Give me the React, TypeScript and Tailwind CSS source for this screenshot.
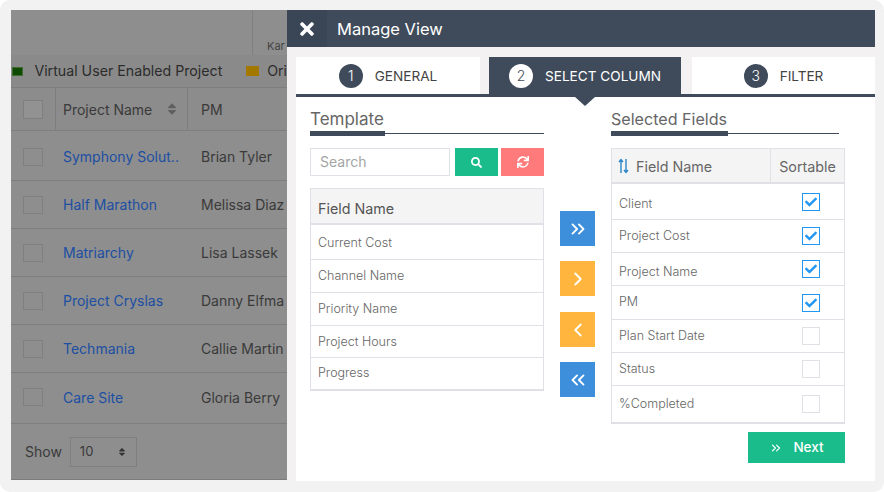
import { FaCheck, FaSearch, FaSort, FaSync, FaTimes } from 'react-icons/fa';
import { FiChevronLeft, FiChevronRight, FiChevronsLeft, FiChevronsRight } from 'react-icons/fi';

const projects = [
  { name: 'Symphony Solut..', pm: 'Brian Tyler' },
  { name: 'Half Marathon', pm: 'Melissa Diaz' },
  { name: 'Matriarchy', pm: 'Lisa Lassek' },
  { name: 'Project Cryslas', pm: 'Danny Elfma' },
  { name: 'Techmania', pm: 'Callie Martin' },
  { name: 'Care Site', pm: 'Gloria Berry' },
];

const templateFields = [
  { label: 'Current Cost', row: 'h-[35px] pt-[3px]' },
  { label: 'Channel Name', row: 'h-[33px]' },
  { label: 'Priority Name', row: 'h-[33px] pt-[1px]' },
  { label: 'Project Hours', row: 'h-[32px] pt-[1px]' },
  { label: 'Progress', row: 'h-[31px]' },
];

const selectedFields = [
  { label: 'Client', checked: true, row: 'h-[36px]', text: 'pt-[5px]' },
  { label: 'Project Cost', checked: true, row: 'h-[33px]', text: '' },
  { label: 'Project Name', checked: true, row: 'h-[33px]', text: 'pt-[6px]' },
  { label: 'PM', checked: true, row: 'h-[34px]', text: '' },
  { label: 'Plan Start Date', checked: false, row: 'h-[33px]', text: 'pt-[1px]' },
  { label: 'Status', checked: false, row: 'h-[33px]', text: '' },
  { label: '%Completed', checked: false, row: 'h-[36px]', text: 'pt-[1px]' },
];

function Heading({ title, size, underline, rule }: { title: string; size: string; underline: string; rule: string }) {
  return (
    <div className={rule}>
      <div className={`${size} leading-[24px] text-[#666]`}>{title}</div>
      <div className="flex items-center h-[5px]">
        <div className={`${underline} h-[5px] bg-[#3f4b5b]`} />
        <div className="flex-1 h-[1px] bg-[#3f4b5b]" />
      </div>
    </div>
  );
}

function Step({ n, label, active, className }: { n: number; label: string; active?: boolean; className: string }) {
  return (
    <div
      className={`${className} relative h-[37px] flex items-center justify-center gap-[12px] text-[13.6px] ${
        active ? 'bg-[#3f4b5b] text-white' : 'bg-white text-[#444]'
      }`}
    >
      <span
        className={`w-[24px] h-[24px] rounded-full flex items-center justify-center text-[14px] font-light ${
          active ? 'bg-white text-[#3f4b5b]' : 'bg-[#3f4b5b] text-white'
        }`}
      >
        {n}
      </span>
      <span className="pt-[2px]">{label}</span>
      {active && (
        <span className="absolute left-[86px] top-[40px] border-x-[10px] border-t-[9px] border-x-transparent border-t-[#3f4b5b]" />
      )}
    </div>
  );
}

function MoveButton({ color, children }: { color: string; children: React.ReactNode }) {
  return <div className={`w-[35px] h-[35px] flex items-center justify-center text-white text-[22px] ${color}`}>{children}</div>;
}

export default function App() {
  return (
    <div className="w-[884px] h-[492px] bg-white overflow-hidden" style={{ fontFamily: 'Inter, "Open Sans", sans-serif' }}>
      <div className="w-full h-full rounded-[10px] bg-[#f2f2f2] pl-[11px] pt-[10px] flex">
        {/* dimmed page behind the drawer */}
        <div className="w-[276px] h-[470px] bg-[#8e8e8e] border-b border-[#7b7b7b] flex flex-col text-[#3e3e3e] overflow-hidden whitespace-nowrap">
          <div className="h-[45px] flex shrink-0">
            <div className="w-[242px] border-r border-[#808080]" />
            <div className="pl-[14px] pt-[28px] text-[11px] text-[#444]">Kar</div>
          </div>
          <div className="h-[33px] shrink-0 bg-[#8a8a8a] border-b border-[#7e7e7e] flex items-center text-[14.2px] text-[#2c2c2c]">
            <span className="w-[13px] h-[9px] ml-[1px] bg-[#0e4a00] border border-[#3d6b30]" />
            <span className="ml-[11px]">Virtual User Enabled Project</span>
            <span className="w-[15px] h-[10px] ml-[24px] bg-[#a37800]" />
            <span className="ml-[8px]">Ori</span>
          </div>
          <div className="h-[43px] shrink-0 bg-[#8c8c8c] border-b border-[#7e7e7e] flex items-center text-[14px] text-[#3a3a3a]">
            <div className="w-[45px] h-full flex items-center pl-[12px] border-r border-[#7e7e7e]">
              <span className="w-[20px] h-[19px] border border-[#7f7f7f] bg-[#929292]" />
            </div>
            <div className="w-[132px] h-full flex items-center justify-between pl-[7px] pr-[8px] border-r border-[#7e7e7e]">
              Project Name
              <FaSort className="text-[#5f5f5f] text-[14px]" />
            </div>
            <div className="pl-[13px]">PM</div>
          </div>
          <div className="pt-[2px]">
            {projects.map((p, i) => (
              <div key={p.name} className={`h-[48px] shrink-0 flex items-center text-[14px] ${i < projects.length - 1 ? 'border-b border-[#7e7e7e]' : ''}`}>
                <div className="w-[45px] pl-[12px]">
                  <span className="block w-[20px] h-[18px] border border-[#7f7f7f] bg-[#8e8e8e]" />
                </div>
                <div className="w-[138px] pl-[7px] text-[#1c4fa3]">{p.name}</div>
                <div className="pl-[7px] text-[#3a3a3a]">{p.pm}</div>
              </div>
            ))}
          </div>
          <div className="mt-[2px] flex-1 border-t border-[#7e7e7e] flex items-center pl-[14px] text-[14px] text-[#3a3a3a]">
            Show
            <div className="ml-[8px] w-[67px] h-[30px] border border-[#7f7f7f] flex items-center justify-between pl-[9px] pr-[9px] text-[13px]">
              10
              <FaSort className="text-[#333] text-[10px]" />
            </div>
          </div>
        </div>

        {/* Manage View drawer */}
        <div className="w-[588px] h-[471px] bg-[#f3f1f2] flex flex-col">
          <div className="h-[37px] bg-[#3f4b5b] flex items-center text-white">
            <div className="w-[40px] h-full bg-[#3a4656] flex items-center justify-center text-[20px]">
              <FaTimes />
            </div>
            <span className="ml-[10px] pt-[1px] text-[16.5px]">Manage View</span>
          </div>
          <div className="mt-[10px] ml-[9px] flex">
            <Step n={1} label="GENERAL" className="w-[184px]" />
            <Step n={2} label="SELECT COLUMN" active className="w-[192px] ml-[9px]" />
            <Step n={3} label="FILTER" className="w-[183px] ml-[11px]" />
          </div>
          <div className="ml-[9px] flex-1 border-t-[3px] border-[#3f4b5b] bg-white flex">
            <div className="w-[248px] pl-[14px]">
              <Heading title="Template" size="text-[17px]" underline="w-[75px]" rule="w-[234px] mt-[10px]" />
              <div className="mt-[12px] flex gap-[5px] w-[234px]">
                <div className="w-[140px] h-[28px] border border-[#e0e0e6] flex items-center pl-[9px] pb-[2px] text-[14px] text-[#a5a5a5]">Search</div>
                <div className="w-[43px] h-[28px] bg-[#1abc8b] text-white flex items-center justify-center text-[11px]">
                  <FaSearch />
                </div>
                <div className="ml-[-2px] w-[43px] h-[28px] bg-[#ff7a7a] text-white flex items-center justify-center text-[12px]">
                  <FaSync />
                </div>
              </div>
              <div className="mt-[12px] w-[234px] border border-[#e0e0e6] border-b-2">
                <div className="h-[36px] bg-[#f4f4f4] border-b-2 border-[#e0e0e6] flex items-center pl-[7px] pt-[6px] text-[14.3px] text-[#555]">Field Name</div>
                {templateFields.map((f, i) => (
                  <div
                    key={f.label}
                    className={`${f.row} ${i < templateFields.length - 1 ? 'border-b border-[#e0e0e6]' : ''} flex items-center pl-[7px] text-[12.5px] font-light text-[#666]`}
                  >
                    {f.label}
                  </div>
                ))}
              </div>
            </div>

            <div className="w-[35px] ml-[16px] pt-[114px] flex flex-col">
              <MoveButton color="bg-[#3d8fdb]"><FiChevronsRight /></MoveButton>
              <div className="h-[15px]" />
              <MoveButton color="bg-[#ffb53e]"><FiChevronRight /></MoveButton>
              <div className="h-[16px]" />
              <MoveButton color="bg-[#ffb53e]"><FiChevronLeft /></MoveButton>
              <div className="h-[15px]" />
              <MoveButton color="bg-[#3d8fdb]"><FiChevronsLeft /></MoveButton>
            </div>

            <div className="ml-[16px] w-[234px]">
              <Heading title="Selected Fields" size="text-[16.1px]" underline="w-[117px]" rule="w-[228px] mt-[10px]" />
              <div className="mt-[12px] border border-[#e0e0e6] border-b-2">
                <div className="h-[35px] bg-[#f4f4f4] border-b-2 border-[#e0e0e6] flex items-center text-[14.3px] text-[#666]">
                  <div className="w-[159px] h-full flex items-center pl-[6px] gap-[7px] border-r border-[#e0e0e6]">
                    <svg width="11" height="16" viewBox="0 0 11 16" fill="none" stroke="#2a86c8" strokeWidth="1.4">
                      <path d="M3 15V1.5M1 4l2-2.5L5 4" />
                      <path d="M8 1v13.5M6 12l2 2.5 2-2.5" />
                    </svg>
                    <span className="pt-[2px]">Field Name</span>
                  </div>
                  <div className="flex-1 text-center pt-[2px]">Sortable</div>
                </div>
                {selectedFields.map((f, i) => (
                  <div
                    key={f.label}
                    className={`${f.row} ${i < selectedFields.length - 1 ? 'border-b border-[#e0e0e6]' : ''} flex items-center pl-[7px] pr-[24px] justify-between text-[12.5px] font-light text-[#666]`}
                  >
                    <span className={f.text}>{f.label}</span>
                    {f.checked ? (
                      <span className="w-[18px] h-[18px] border border-[#2196f3] flex items-center justify-center text-[#2196f3] text-[12px]">
                        <FaCheck />
                      </span>
                    ) : (
                      <span className="w-[18px] h-[18px] border border-[#e0e0e6]" />
                    )}
                  </div>
                ))}
              </div>
              <div className="mt-[8px] ml-auto w-[97px] h-[31px] bg-[#1abc8b] text-white flex items-center justify-center gap-[10px] text-[13.5px] font-medium">
                <FiChevronsRight className="text-[14px]" />
                Next
              </div>
            </div>
          </div>
        </div>
      </div>
    </div>
  );
}
